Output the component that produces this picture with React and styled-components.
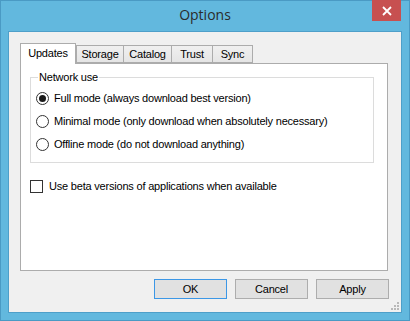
import React, { useState } from "react";
import styled, { createGlobalStyle } from "styled-components";

const Global = createGlobalStyle`
  html, body { margin: 0; padding: 0; }
  body {
    font-family: "Liberation Sans", Arial, sans-serif;
    font-size: 11px;
    letter-spacing: -0.2px;
    color: #000;
  }
`;

const Window = styled.div`
  width: 410px;
  height: 321px;
  box-sizing: border-box;
  background: #62b8de;
  border: 1px solid #4a9ac4;
  display: flex;
  flex-direction: column;
`;

const TitleBar = styled.div`
  height: 30px;
  padding-bottom: 3px;
  box-sizing: border-box;
  position: relative;
  display: flex;
  align-items: center;
  justify-content: center;
  font-size: 14px;
  letter-spacing: 0;
  color: #2b2b2b;
  font-family: "Open Sans", "Liberation Sans", sans-serif;
`;

const CloseButton = styled.div`
  position: absolute;
  top: -1px;
  right: 8px;
  width: 29px;
  height: 21px;
  background: #c75050;
  display: flex;
  align-items: center;
  justify-content: center;
`;

const Client = styled.div`
  flex: 1;
  margin: 0 7px 7px 7px;
  background: #f0f0f0;
  border: 1px solid #4e9fc9;
  padding: 11px 13px 0 11px;
  position: relative;
  display: flex;
  flex-direction: column;
`;

const TabStrip = styled.div`
  display: flex;
  align-items: flex-end;
  height: 20px;
  position: relative;
  z-index: 1;
`;

const Tab = styled.div`
  box-sizing: border-box;
  height: ${(p) => (p.$active ? "21px" : "18px")};
  margin-bottom: ${(p) => (p.$active ? "-1px" : "0")};
  margin-left: ${(p) => (p.$active || p.$first ? "0" : "-1px")};
  border: 1px solid #acacac;
  border-bottom: ${(p) => (p.$active ? "none" : "1px solid #acacac")};
  background: ${(p) => (p.$active ? "#fff" : "linear-gradient(#f0f0f0, #e5e5e5)")};
  display: flex;
  align-items: center;
  justify-content: center;
  padding-bottom: ${(p) => (p.$active ? "3px" : "0")};
  width: ${(p) => p.$w}px;
`;

const Panel = styled.div`
  height: 208px;
  box-sizing: border-box;
  background: #fff;
  border: 1px solid #acacac;
  padding: 6px 13px 0 9px;
`;

const Group = styled.fieldset`
  margin: 0;
  border: 1px solid #dcdcdc;
  padding: 6px 0 10px 5px;
  display: flex;
  flex-direction: column;
  gap: 7px;
`;

const Legend = styled.legend`
  padding: 0 1px;
  margin-left: 2px;
  line-height: 14px;
`;

const Option = styled.label`
  display: flex;
  align-items: center;
  gap: 5px;
  height: 16px;
`;

const RadioDot = styled.span`
  width: 11px;
  height: 11px;
  border: 1px solid #333;
  border-radius: 50%;
  background: #fff;
  display: flex;
  align-items: center;
  justify-content: center;
  &::after {
    content: "";
    width: 7px;
    height: 7px;
    border-radius: 50%;
    background: ${(p) => (p.$on ? "#1a1a1a" : "transparent")};
  }
`;

const CheckRow = styled.label`
  display: flex;
  align-items: center;
  gap: 6px;
  margin-top: 16px;
  height: 14px;
`;

const CheckBox = styled.span`
  width: 11px;
  height: 11px;
  border: 1px solid #333;
  background: #fff;
`;

const ButtonRow = styled.div`
  display: flex;
  justify-content: flex-end;
  gap: 8px;
  margin-top: 8px;
  margin-right: -1px;
`;

const Button = styled.div`
  width: 73px;
  height: 20px;
  box-sizing: border-box;
  border: 1px solid ${(p) => (p.$default ? "#3c97e6" : "#adadad")};
  background: #e1e1e1;
  display: flex;
  align-items: center;
  justify-content: center;
`;

const Grip = styled.svg`
  position: absolute;
  right: 2px;
  bottom: 2px;
`;

const tabs = [
  ["Updates", 56],
  ["Storage", 48],
  ["Catalog", 49],
  ["Trust", 42],
  ["Sync", 41],
];

const options = [
  "Full mode (always download best version)",
  "Minimal mode (only download when absolutely necessary)",
  "Offline mode (do not download anything)",
];

export default function App() {
  const [mode, setMode] = useState(0);
  return (
    <>
      <Global />
      <Window>
        <TitleBar>
          Options
          <CloseButton>
            <svg width="10" height="10" viewBox="0 0 10 10">
              <path d="M1 1L9 9M9 1L1 9" stroke="#fff" strokeWidth="1.8" />
            </svg>
          </CloseButton>
        </TitleBar>
        <Client>
          <TabStrip>
            {tabs.map(([t, w], i) => (
              <Tab key={t} $active={i === 0} $first={i === 1} $w={w}>
                {t}
              </Tab>
            ))}
          </TabStrip>
          <Panel>
            <Group>
              <Legend>Network use</Legend>
              {options.map((o, i) => (
                <Option key={o} onClick={() => setMode(i)}>
                  <RadioDot $on={mode === i} />
                  {o}
                </Option>
              ))}
            </Group>
            <CheckRow>
              <CheckBox />
              Use beta versions of applications when available
            </CheckRow>
          </Panel>
          <ButtonRow>
            <Button $default>OK</Button>
            <Button>Cancel</Button>
            <Button>Apply</Button>
          </ButtonRow>
          <Grip width="10" height="10" viewBox="0 0 10 10">
            {[[8, 2], [5, 5], [8, 5], [2, 8], [5, 8], [8, 8]].map(([x, y]) => (
              <rect key={x + "-" + y} x={x} y={y} width="2" height="2" fill="#b8b8b8" />
            ))}
          </Grip>
        </Client>
      </Window>
    </>
  );
}
